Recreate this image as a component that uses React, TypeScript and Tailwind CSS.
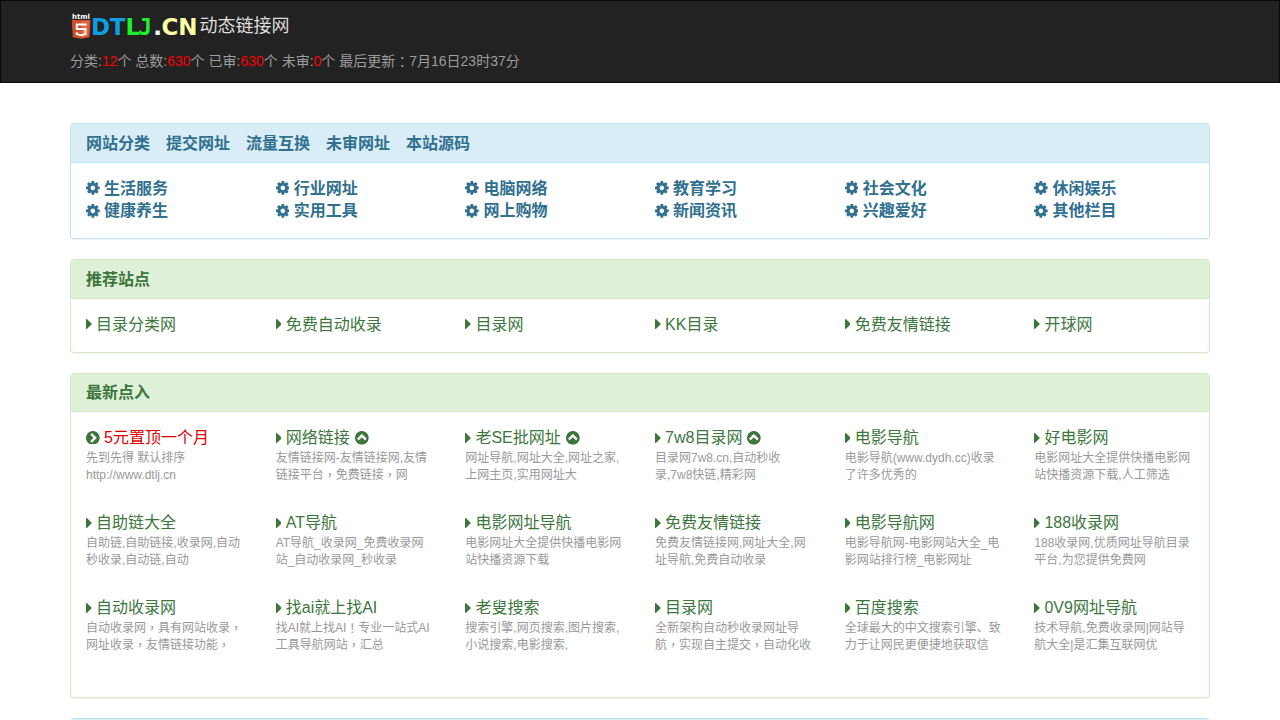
import type { ReactNode } from "react";

const categories = [
  "生活服务", "行业网址", "电脑网络", "教育学习", "社会文化", "休闲娱乐",
  "健康养生", "实用工具", "网上购物", "新闻资讯", "兴趣爱好", "其他栏目",
];

const menu = ["网站分类", "提交网址", "流量互换", "未审网址", "本站源码"];

const recommended = ["目录分类网", "免费自动收录", "目录网", "KK目录", "免费友情链接", "开球网"];

interface Site {
  name: string;
  lines: [string, string];
  up?: boolean;
  pinned?: boolean;
}

const sites: Site[] = [
  { name: "5元置顶一个月", lines: ["先到先得 默认排序", "http://www.dtlj.cn"], pinned: true },
  { name: "网络链接", lines: ["友情链接网-友情链接网,友情", "链接平台，免费链接，网"], up: true },
  { name: "老SE批网址", lines: ["网址导航,网址大全,网址之家,", "上网主页,实用网址大"], up: true },
  { name: "7w8目录网", lines: ["目录网7w8.cn,自动秒收", "录,7w8快链,精彩网"], up: true },
  { name: "电影导航", lines: ["电影导航(www.dydh.cc)收录", "了许多优秀的"] },
  { name: "好电影网", lines: ["电影网址大全提供快播电影网", "站快播资源下载,人工筛选"] },
  { name: "自助链大全", lines: ["自助链,自助链接,收录网,自动", "秒收录,自动链,自动"] },
  { name: "AT导航", lines: ["AT导航_收录网_免费收录网", "站_自动收录网_秒收录"] },
  { name: "电影网址导航", lines: ["电影网址大全提供快播电影网", "站快播资源下载"] },
  { name: "免费友情链接", lines: ["免费友情链接网,网址大全,网", "址导航,免费自动收录"] },
  { name: "电影导航网", lines: ["电影导航网-电影网站大全_电", "影网站排行榜_电影网址"] },
  { name: "188收录网", lines: ["188收录网,优质网址导航目录", "平台,为您提供免费网"] },
  { name: "自动收录网", lines: ["自动收录网，具有网站收录，", "网址收录，友情链接功能，"] },
  { name: "找ai就上找AI", lines: ["找AI就上找AI！专业一站式AI", "工具导航网站，汇总"] },
  { name: "老叟搜索", lines: ["搜索引擎,网页搜索,图片搜索,", "小说搜索,电影搜索,"] },
  { name: "目录网", lines: ["全新架构自动秒收录网址导", "航，实现自主提交，自动化收"] },
  { name: "百度搜索", lines: ["全球最大的中文搜索引擎、致", "力于让网民更便捷地获取信"] },
  { name: "0V9网址导航", lines: ["技术导航,免费收录网|网站导", "航大全|是汇集互联网优"] },
];

// full-width punctuation sits in the middle of its cell
function Text({ children }: { children: string }) {
  return (
    <>
      {children.split(/([，！：])/).map((part, i) =>
        i % 2 ? <span key={i} className="align-[-1px] font-['Noto_Sans_CJK_TC',sans-serif] leading-[0]" lang="zh-TW">{part}</span> : part
      )}
    </>
  );
}

function Cog() {
  return (
    <svg className="mr-[4.4px] inline-block h-[13.7px] w-[13.7px] align-[-1.5px]" viewBox="128 128 1536 1536" fill="currentColor">
      <path d="M1152 896q0-106-75-181t-181-75-181 75-75 181 75 181 181 75 181-75 75-181zm512-109v222q0 12-8 23t-20 13l-185 28q-19 54-39 91 35 50 107 138 10 12 10 25t-9 23q-27 37-99 108t-94 71q-12 0-26-9l-138-108q-44 23-91 38-16 136-29 186-7 28-36 28h-222q-14 0-24.500-8.500t-11.500-21.500l-28-184q-49-16-90-37l-141 107q-10 9-25 9-14 0-25-11-126-114-165-168-7-10-7-23 0-12 8-23 15-21 51-66.500t54-70.500q-27-50-41-99l-183-27q-13-2-21-12.500t-8-23.500v-222q0-12 8-23t19-13l186-28q14-46 39-92-40-57-107-138-10-12-10-24 0-10 9-23 26-36 98.500-107.500t94.500-71.500q13 0 26 10l138 107q44-23 91-38 16-136 29-186 7-28 36-28h222q14 0 24.500 8.500t11.500 21.500l28 184q49 16 90 37l142-107q9-9 24-9 13 0 25 10 129 119 165 170 7 8 7 22 0 12-8 23-15 21-51 66.500t-54 70.500q26 50 41 98l183 28q13 2 21 12.500t8 23.500z" />
    </svg>
  );
}

function Caret() {
  return (
    <svg className="mr-[4.4px] inline-block h-[10px] w-[5.7px] align-[0.6px]" viewBox="576 384 576 1024" preserveAspectRatio="none" fill="currentColor">
      <path d="M1152 896q0 26-19 45l-448 448q-19 19-45 19t-45-19-19-45v-896q0-26 19-45t45-19 45 19l448 448q19 19 19 45z" />
    </svg>
  );
}

function CircleChevron({ className }: { className: string }) {
  return (
    <svg className={`inline-block h-[13.7px] w-[13.7px] align-[-1px] ${className}`} viewBox="128 128 1536 1536" fill="currentColor">
      <path d="M845 1395l454-454q19-19 19-45t-19-45l-454-454q-19-19-45-19t-45 19l-102 102q-19 19-19 45t19 45l307 307-307 307q-19 19-19 45t19 45l102 102q19 19 45 19t45-19zm819-499q0 209-103 385.500t-279.500 279.500-385.500 103-385.500-103-279.500-279.500-103-385.500 103-385.500 279.500-279.500 385.500-103 385.500 103 279.500 279.500 103 385.500z" />
    </svg>
  );
}

function Html5Logo() {
  return (
    <svg className="h-[26px] w-[21px] shrink-0" viewBox="0 0 21 26">
      <text x="2" y="6.300" textLength="18" lengthAdjust="spacingAndGlyphs" className="fill-white font-['DejaVu_Sans',sans-serif] text-[7px] font-bold">html</text>
      <path d="M1.800 7h18.700l-1 17.300-8.400 1.500-8.300-1.500z" fill="#cf4f2c" />
      <path d="M11.100 8.300h8l-.8 14.900-7.200 1.300z" fill="#e8663d" />
      <path d="M16.500 11.500H6.800v4.600h8.600v5l-4.300 1.200-4.400-1.200v-1.800" fill="none" stroke="#fff" strokeWidth="2" />
    </svg>
  );
}

interface PanelProps {
  tone: "info" | "success";
  title?: ReactNode;
  children?: ReactNode;
}

function Panel({ tone, title, children }: PanelProps) {
  const info = tone === "info";
  return (
    <section className={`mb-5 rounded border bg-white shadow-[0_1px_1px_rgba(0,0,0,0.05)] ${info ? "border-[#bce8f1] text-[#31708f]" : "border-[#d6e9c6] text-[#3c763d]"}`}>
      <h3 className={`flex gap-4 rounded-t-[3px] border-b px-[15px] pt-[10.6px] pb-[9.4px] text-base leading-[17.6px] font-bold ${info ? "border-[#bce8f1] bg-[#d9edf7]" : "border-[#d6e9c6] bg-[#dff0d8]"}`}>
        {title}
      </h3>
      <div className="grid grid-cols-6 py-[15px] text-base leading-[22.86px]">{children}</div>
    </section>
  );
}

export default function App() {
  return (
    <div className="h-[720px] overflow-hidden bg-white font-['Liberation_Sans','Noto_Sans_CJK_SC',sans-serif]">
      <header className="mb-10 h-[83px] border border-[#080808] bg-[#222] px-[69px]">
        <div className="flex h-[50px] items-center text-lg text-[#ddd]">
          <Html5Logo />
          <span className="mr-[1.5px] flex w-[107px] shrink-0 pt-[3px] font-['DejaVu_Sans',sans-serif] text-[23px] font-bold">
            <span className="w-[18.7px] text-[#0d9fe2]">D</span>
            <span className="w-[15.7px] text-[#0d9fe2]">T</span>
            <span className="w-[12.9px] text-[#1cf02c]">L</span>
            <span className="w-[14.9px] font-['DejaVu_Sans_Mono',monospace] text-[#1cf02c]">J</span>
            <span className="w-[8.3px] text-white">.</span>
            <span className="w-[16.7px] text-[#ffffa5]">C</span>
            <span className="text-[#ffffa5]">N</span>
          </span>
          <span>动态链接网</span>
        </div>
        <p className="text-sm leading-5 text-[#9d9d9d]">
          分类:<span className="text-[#f00]">12</span>个 总数:<span className="text-[#f00]">630</span>个 已审:
          <span className="text-[#f00]">630</span>个 未审:<span className="text-[#f00]">0</span>个 <Text>最后更新：7月16日23时37分</Text>
        </p>
      </header>

      <main className="mx-auto w-[1140px]">
        <Panel tone="info" title={menu.map((m) => <a key={m} href="#">{m}</a>)}>
          {categories.map((c) => (
            <a key={c} href="#" className="px-[15px] font-bold"><Cog />{c}</a>
          ))}
        </Panel>

        <Panel tone="success" title="推荐站点">
          {recommended.map((r) => (
            <a key={r} href="#" className="px-[15px]"><Caret />{r}</a>
          ))}
        </Panel>

        <Panel tone="success" title="最新点入">
          {sites.map((s, i) => (
            <div key={i} className="h-[85px] px-[15px] whitespace-nowrap">
              <a href="#" className="block h-[22.86px]">
                {s.pinned ? <CircleChevron className="mr-[4.4px]" /> : <Caret />}
                <span className={s.pinned ? "text-[#e00000]" : ""}>{s.name}</span>
                {s.up && <CircleChevron className="ml-[5px] -rotate-90" />}
              </a>
              <p className="text-xs leading-[17.14px] text-[#999]">
                <Text>{s.lines[0]}</Text>
                <br />
                <Text>{s.lines[1]}</Text>
              </p>
            </div>
          ))}
        </Panel>

        <Panel tone="info" />
      </main>
    </div>
  );
}
